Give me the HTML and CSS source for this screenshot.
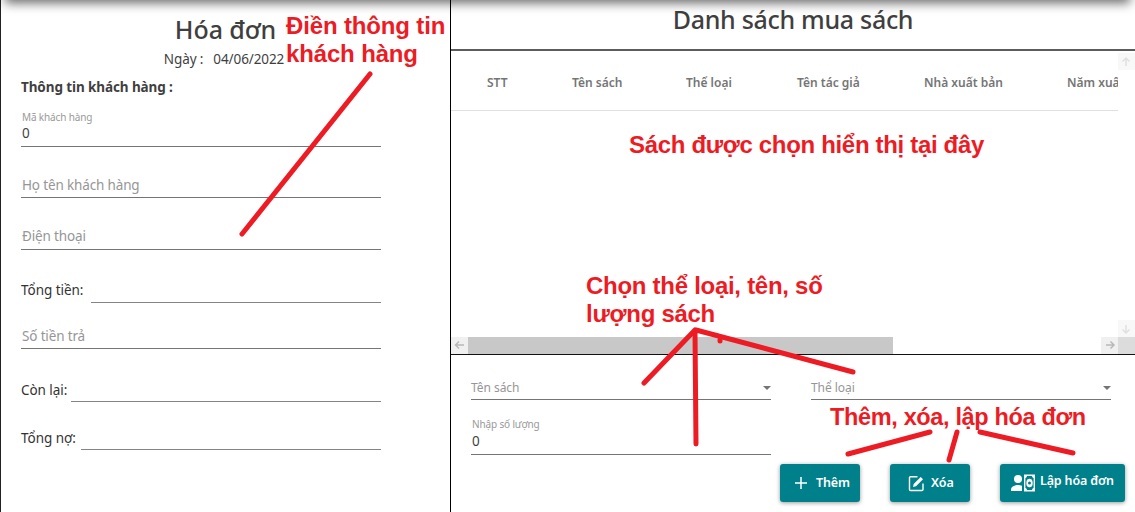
FILE: index.html
```html
<!DOCTYPE html>
<html lang="vi">
<head>
<meta charset="utf-8">
<title>Hóa đơn</title>
<link rel="stylesheet" href="styles.css">
</head>
<body>
<main class="page">
  <section class="invoice">
    <h1 class="title"><span class="t-invoice">Hóa đơn</span></h1>
    <div class="date"><span>Ngày :</span><span>04/06/2022</span></div>
    <h2 class="subtitle">Thông tin khách hàng :</h2>
    <div class="field tall"><label class="small">Mã khách hàng</label><span class="value">0</span></div>
    <div class="field name"><span class="hint">Họ tên khách hàng</span></div>
    <div class="field phone"><span class="hint">Điện thoại</span></div>
    <div class="row total"><span class="caption">Tổng tiền:</span><span class="blank"></span></div>
    <div class="field paid"><span class="hint">Số tiền trả</span></div>
    <div class="row remain"><span class="caption">Còn lại:</span><span class="blank"></span></div>
    <div class="row debt"><span class="caption">Tổng nợ:</span><span class="blank"></span></div>
  </section>
  <section class="books">
    <h1 class="list-title"><span>Danh sách mua sách</span></h1>
    <div class="table-wrap">
      <div class="table-main">
        <div class="thead">
          <span class="th c1">STT</span><span class="th c2">Tên sách</span><span class="th c3">Thể loại</span><span class="th c4">Tên tác giả</span><span class="th c5">Nhà xuất bản</span><span class="th c6">Năm xuấ</span>
        </div>
        <div class="tbody"></div>
        <div class="hscroll">
          <span class="sbtn"><svg width="17" height="17" viewBox="0 0 17 17"><path d="M13 8H5M8 4.500L4.500 8L8 11.500"/></svg></span>
          <span class="thumb"></span>
          <span class="sbtn end"><svg width="17" height="17" viewBox="0 0 17 17"><path d="M5 8H13M9.500 4.500L13 8L9.500 11.500"/></svg></span>
        </div>
      </div>
      <div class="vscroll">
        <span class="sbtn faint"><svg width="17" height="17" viewBox="0 0 17 17"><path d="M8 13V5M4.500 8.500L8 5L11.500 8.500"/></svg></span>
        <span class="sbtn faint down"><svg width="17" height="17" viewBox="0 0 17 17"><path d="M8 5V13M4.500 9.500L8 13L11.500 9.500"/></svg></span>
        <span class="corner"></span>
      </div>
    </div>
    <div class="form">
      <div class="selects">
        <div class="select"><span>Tên sách</span><i class="caret"></i></div>
        <div class="select"><span>Thể loại</span><i class="caret"></i></div>
      </div>
      <div class="field qty"><label class="small">Nhập số lượng</label><span class="value">0</span></div>
      <div class="actions">
        <button class="btn add"><svg width="14" height="14" viewBox="0 0 14 14"><path d="M7 1V13M1 7H13" stroke="#fff" stroke-width="1.500"/></svg><span>Thêm</span></button>
        <button class="btn del"><svg width="17" height="17" viewBox="0 0 17 17"><path d="M9.500 1.700H2.500Q1.500 1.700 1.500 2.700V14.500Q1.500 15.500 2.500 15.500H14Q15 15.500 15 14.500V8.500" fill="none" stroke="#fff" stroke-width="1.400"/><path d="M5 12L5.700 9L12.700 2L15 4.300L8 11.300Z" fill="#fff"/></svg><span>Xóa</span></button>
        <button class="btn bill"><svg width="26" height="18" viewBox="0 0 26 18"><circle cx="8" cy="5" r="4" fill="#fff"/><path d="M1 17V15.500C1 12.500 5 11 8 11Q10 11 12 11.700V17Z" fill="#fff"/><path d="M14 0.500H25V17.500H14Z" fill="#fff"/><path d="M17 2H22Q22 3.600 23.600 4V14Q22 14.400 22 16H17Q17 14.400 15.400 14V4Q17 3.600 17 2Z" fill="#00808a"/><ellipse cx="19.500" cy="9" rx="3.200" ry="4.300" fill="#fff"/><circle cx="19.500" cy="9" r="1.500" fill="#00808a"/></svg><span>Lập hóa đơn</span></button>
      </div>
    </div>
  </section>
</main>
<div class="topbar-shadow"></div>
<svg class="marks" width="1135" height="512" viewBox="0 0 1135 512">
  <path d="M370 74L242 234M695 330L644 383M696 330L853 372M695 333L696 444M930 432L848 454M957 432L949 460M980 432L1073 453"/>
  <path d="M720 340V341"/>
</svg>
<div class="note n1">Điền thông tin<br>khách hàng</div>
<div class="note n2">Sách được chọn hiển thị tại đây</div>
<div class="note n3">Chọn thể loại, tên, số<br>lượng sách</div>
<div class="note n4">Thêm, xóa, lập hóa đơn</div>
</body>
</html>
```
FILE: styles.css
```css
* { box-sizing: border-box; }
body { margin: 0; width: 1135px; height: 512px; overflow: hidden; position: relative; background: #fff; color: #3f3f3f; font: 13.5px/20px "Noto Sans", "Open Sans", sans-serif; letter-spacing: -.15px; }
h1, h2 { margin: 0; }
.page { display: flex; height: 512px; }
.invoice { width: 450px; border-left: 1px solid #222; padding: 10px 69px 0 20px; display: flex; flex-direction: column; }
.title, .list-title { font-size: 25px; line-height: 38px; font-weight: 500; text-align: center; white-space: nowrap; letter-spacing: -.3px; }
.title { margin-right: -49px; letter-spacing: -.1px; }
.date { height: 22px; margin: 0 -46px 0 0; display: flex; gap: 10px; justify-content: center; align-items: center; letter-spacing: -.1px; }
.subtitle { font-size: 13.5px; line-height: 20px; font-weight: 700; margin-top: 7px; white-space: nowrap; letter-spacing: -.1px; }
.field { border-bottom: 1px solid #757575; padding: 0 1px 2px; display: flex; flex-direction: column; justify-content: flex-end; white-space: nowrap; }
.small { font-size: 10px; line-height: 12px; color: #999; }
.hint { color: #969696; }
.tall { height: 50px; }
.tall .value { line-height: 21px; }
.name { height: 51px; }
.phone { height: 52px; padding-bottom: 3px; }
.paid { height: 46px; }
.row { display: flex; align-items: flex-end; white-space: nowrap; }
.row .caption { padding-bottom: 2px; color: #333; letter-spacing: -.05px; }
.total .caption { padding-bottom: 3px; }
.blank { margin-left: auto; border-bottom: 1px solid #858585; }
.total, .remain { height: 53px; }
.debt { height: 48px; }
.total .blank { width: 290px; }
.remain .blank { width: 310px; }
.debt .blank { width: 300px; }
.books { width: 685px; border-left: 1px solid #000; display: flex; flex-direction: column; }
.list-title { height: 51px; border-bottom: 2px solid #5c5c5c; }
.table-wrap { height: 304px; border-bottom: 1px solid #111; display: flex; }
.table-main { width: 667px; display: flex; flex-direction: column; overflow: hidden; }
.thead { height: 60px; border-bottom: 1px solid #e0e0e0; display: flex; align-items: center; padding: 4px 0 0 36px; white-space: nowrap; }
.th { flex: none; font-size: 12px; font-weight: 600; color: #757575; letter-spacing: 0; }
.c1 { width: 85px; } .c2 { width: 114px; } .c3 { width: 111px; } .c4 { width: 127px; } .c5 { width: 143px; }
.tbody { flex: 1; }
.hscroll { height: 17px; display: flex; }
.sbtn { flex: none; width: 17px; height: 17px; background: #f0f0f0; }
.sbtn svg { display: block; fill: none; stroke: #b8b8b8; stroke-width: 1.5; }
.faint { background: #f8f8f8; }
.faint svg { stroke: #e0e0e0; }
.thumb { width: 425px; background: #c8c8c8; }
.end { margin-left: auto; }
.vscroll { width: 17px; padding-top: 2px; display: flex; flex-direction: column; }
.down { margin-top: auto; }
.corner { height: 17px; background: #dcdcdc; }
.form { flex: 1; padding: 19px 10px 0 20px; display: flex; flex-direction: column; }
.selects { display: flex; gap: 40px; }
.select { width: 300px; height: 26px; padding-top: 2px; border-bottom: 1px solid #757575; display: flex; align-items: center; justify-content: space-between; color: #969696; font-size: 12px; letter-spacing: -.05px; }
.select span { padding-top: 1px; }
.caret { border: 4px solid transparent; border-top-color: #757575; border-bottom: 0; }
.qty { width: 300px; height: 55px; }
.qty .small { line-height: 14px; }
.qty .value { line-height: 20px; padding-bottom: 1px; }
.actions { display: flex; justify-content: flex-end; gap: 30px; margin-top: 9px; }
.btn { height: 38px; border: 0; border-radius: 3px; background: #00808a; color: #fff; font: 600 12.5px/18px "Noto Sans", "Open Sans", sans-serif; letter-spacing: -.15px; padding: 0; display: flex; align-items: center; white-space: nowrap; box-shadow: 0 1px 4px rgba(0,0,0,.4); }
.add { width: 80px; padding-left: 14px; gap: 8px; }
.del { width: 80px; padding-left: 18px; gap: 6px; }
.bill { width: 125px; padding-left: 10px; gap: 4px; }
.bill span { padding-bottom: 4px; }
.topbar-shadow { position: absolute; left: 7px; right: 7px; top: -10px; height: 10px; box-shadow: 0 1px 11px 2px rgba(0,0,0,.6); }
.marks { position: absolute; left: 0; top: 0; fill: none; stroke: #ed1c24; stroke-width: 5; stroke-linecap: round; stroke-linejoin: round; }
.note { position: absolute; color: #ed1c24; font: 700 24px/28px "Liberation Sans", Arial, sans-serif; white-space: nowrap; }
.n1 { left: 286px; top: 12px; letter-spacing: -.15px; }
.n2 { left: 629px; top: 131px; letter-spacing: -.33px; }
.n3 { left: 586px; top: 272px; letter-spacing: -.28px; }
.n4 { left: 830px; top: 403px; font-size: 23.5px; letter-spacing: -.35px; }
```
